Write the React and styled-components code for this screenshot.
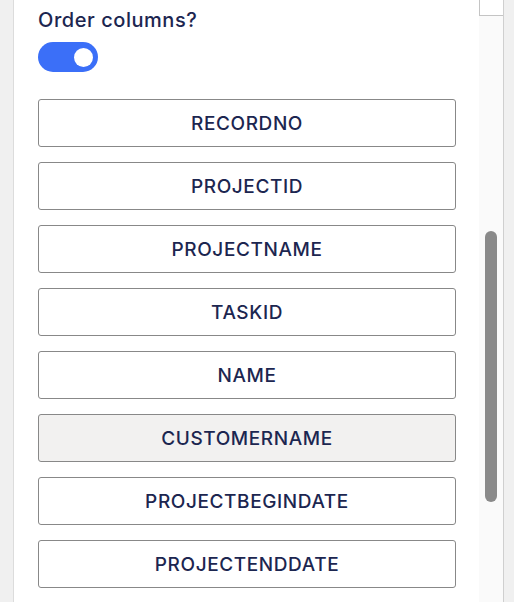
import React from "react";
import styled, { createGlobalStyle } from "styled-components";

const Global = createGlobalStyle`
  html, body { margin: 0; padding: 0; background: #ffffff; }
  body { font-family: Inter, "Noto Sans", "Liberation Sans", sans-serif; }
`;

const Page = styled.div`
  display: flex;
  width: 514px;
  height: 602px;
  overflow: hidden;
`;

const SideStrip = styled.div`
  width: ${(p) => p.$w}px;
  flex: none;
  background: #f0f0f0;
  border-${(p) => p.$side}: 1px solid ${(p) => p.$line};
`;

const Content = styled.div`
  flex: 1;
  background: #ffffff;
  padding: 8px 23px 0 24px;
  display: flex;
  flex-direction: column;
`;

const Label = styled.div`
  font-size: 20px;
  line-height: 24px;
  color: #1c2650;
  font-weight: 450;
  letter-spacing: 0.55px;
`;

const Toggle = styled.div`
  margin-top: 10px;
  width: 60px;
  height: 30px;
  border-radius: 15px;
  background: #3b6ff8;
  display: flex;
  align-items: center;
  justify-content: flex-end;
  padding: 0 5px;
  box-sizing: border-box;
`;

const Knob = styled.div`
  width: 19px;
  height: 19px;
  border-radius: 50%;
  background: #ffffff;
`;

const List = styled.div`
  margin-top: 27px;
  display: flex;
  flex-direction: column;
  gap: 15px;
`;

const ColumnButton = styled.div`
  height: 48px;
  box-sizing: border-box;
  border: 1px solid #888888;
  border-radius: 3px;
  background: ${(p) => (p.$active ? "#f2f1f0" : "#ffffff")};
  display: flex;
  align-items: center;
  justify-content: center;
  font-size: 19px;
  font-weight: 450;
  color: #1c2650;
  letter-spacing: 0.6px;
`;

const Track = styled.div`
  width: 24px;
  flex: none;
  background: #fafafa;
  display: flex;
  flex-direction: column;
  align-items: center;
`;

const TrackCap = styled.div`
  align-self: stretch;
  height: 16px;
  box-sizing: border-box;
  background: #ffffff;
  border-left: 1px solid #c4c4c4;
  border-bottom: 1px solid #c4c4c4;
`;

const Thumb = styled.div`
  margin-top: 215px;
  width: 12px;
  height: 271px;
  border-radius: 6px;
  background: #8a8a8a;
`;

const columns = [
  "RECORDNO",
  "PROJECTID",
  "PROJECTNAME",
  "TASKID",
  "NAME",
  "CUSTOMERNAME",
  "PROJECTBEGINDATE",
  "PROJECTENDDATE",
];

export default function App() {
  return (
    <Page>
      <Global />
      <SideStrip $w={13} $side="right" $line="#dcdcdc" />
      <Content>
        <Label>Order columns?</Label>
        <Toggle>
          <Knob />
        </Toggle>
        <List>
          {columns.map((c) => (
            <ColumnButton key={c} $active={c === "CUSTOMERNAME"}>
              {c}
            </ColumnButton>
          ))}
        </List>
      </Content>
      <Track>
        <TrackCap />
        <Thumb />
      </Track>
      <SideStrip $w={10} $side="left" $line="#cfcfcf" />
    </Page>
  );
}
